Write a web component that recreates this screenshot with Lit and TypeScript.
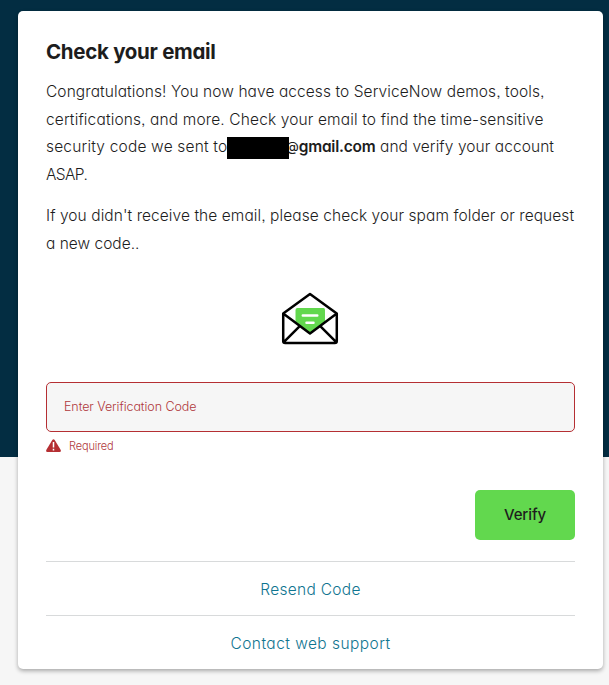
import { LitElement, html, css } from "lit";
import { customElement } from "lit/decorators.js";

@customElement("app-root")
export class AppRoot extends LitElement {
  static styles = css`
    :host {
      display: block;
      box-sizing: border-box;
      height: 685px;
      padding: 11px 6px 16px 18px;
      overflow: hidden;
      background: linear-gradient(#032d42 457px, #f6f6f6 457px);
      font-family: Inter, "Open Sans", sans-serif;
      font-feature-settings: "cv11", "ss03";
      font-weight: 300;
      font-size: 15.5px;
      color: #1d1d1d;
    }
    .card {
      display: flex;
      flex-direction: column;
      box-sizing: border-box;
      height: 658px;
      padding: 27px 28px 0;
      border-radius: 5px;
      background: #fff;
      box-shadow: 0 2px 4px rgba(0, 0, 0, 0.32);
    }
    h1 {
      margin: 0 0 12px;
      font-size: 20.5px;
      line-height: 28px;
      font-weight: 650;
      letter-spacing: -0.3px;
    }
    p {
      margin: 0 0 14px;
      line-height: 27.6px;
      white-space: nowrap;
    }
    .line {
      display: flex;
      height: 27.6px;
    }
    .l1 { letter-spacing: 0.08px; }
    .l2 { letter-spacing: 0.135px; }
    .l4 { letter-spacing: -0.6px; }
    .l5 { letter-spacing: 0.07px; }
    .lead {
      width: 181px;
      letter-spacing: 0.18px;
    }
    .tail { letter-spacing: 0.07px; }
    .address {
      display: flex;
      align-items: center;
      width: 153px;
      font-weight: 600;
    }
    .domain { letter-spacing: -0.25px; }
    .redacted {
      position: relative;
      z-index: 1;
      flex: none;
      width: 62px;
      height: 22px;
      margin-top: 3px;
      background: #000;
    }
    .at {
      margin-left: -3px;
      font-size: 13px;
      font-weight: 500;
    }
    .envelope {
      display: block;
      width: 60px;
      height: 56px;
      margin: 18.5px 235px 36px 234px;
    }
    .field {
      box-sizing: border-box;
      height: 50px;
      padding: 0 17px;
      border: 1px solid #b52f33;
      border-radius: 5px;
      background: #f6f6f6;
      color: #b0383c;
      font-size: 12.5px;
      line-height: 48px;
      letter-spacing: -0.08px;
    }
    .error {
      display: flex;
      align-items: center;
      gap: 8px;
      height: 16px;
      margin-top: 6px;
      color: #b0383c;
      font-size: 11px;
      letter-spacing: -0.15px;
    }
    .error svg {
      width: 15px;
      height: 14px;
    }
    button {
      align-self: flex-end;
      width: 100px;
      height: 50px;
      margin: 36px 0 21px;
      padding: 0 0 1px;
      border: 0;
      border-radius: 5px;
      background: #62d84e;
      color: #1d1d1d;
      font: 550 15px Inter, sans-serif;
      font-feature-settings: inherit;
      letter-spacing: -0.1px;
    }
    .link {
      box-sizing: border-box;
      height: 54px;
      border-top: 1px solid #d8dadb;
      color: #0f7590;
      line-height: 56px;
      text-align: center;
      text-decoration: none;
    }
    .resend { letter-spacing: 0.3px; }
    .support { letter-spacing: 0.45px; }
  `;

  render() {
    return html`
      <main class="card">
        <h1>Check your email</h1>
        <p>
          <span class="line l1">Congratulations! You now have access to ServiceNow demos, tools,</span>
          <span class="line l2">certifications, and more. Check your email to find the time-sensitive</span>
          <span class="line">
            <span class="lead">security code we sent to</span>
            <span class="address"><span class="redacted"></span><span class="at">@</span><span class="domain">gmail.com</span></span>
            <span class="tail">and verify your account</span>
          </span>
          <span class="line l4">ASAP.</span>
        </p>
        <p>
          <span class="line l5">If you didn't receive the email, please check your spam folder or request</span>
          <span class="line">a new code..</span>
        </p>
        <svg class="envelope" viewBox="280 290 60 56" fill="none" stroke-linejoin="round" stroke-linecap="round">
          <path d="M297.500 308h26q1.500 0 1.500 2v13.500l-15 10-14.500-10v-13.500q0-2 2-2z" fill="#62d84e" />
          <path d="M302.800 315.500h14.500M306.500 322.700h7" stroke="#fff" stroke-width="2.500" />
          <path d="M283.200 313.500L310 294l26.800 19.500V341q0 2-2 2h-49.600q-2 0-2-2zL310 333.500l26.800-20M284 342l15-15M336 342l-15-15" stroke="#000" stroke-width="2.500" />
        </svg>
        <div class="field">Enter Verification Code</div>
        <div class="error">
          <svg viewBox="0 0 15 14">
            <path d="M6.300 1Q7.500-.5 8.700 1l5.900 9.800q.9 2-1 2.200H1.400q-1.900-.2-1-2.200z" fill="#b52f33" />
            <path d="M7.500 3v5.500M7.500 9.800v1.600" stroke="#fff" stroke-width="1.500" />
          </svg>
          <span>Required</span>
        </div>
        <button type="button">Verify</button>
        <a class="link resend">Resend Code</a>
        <a class="link support">Contact web support</a>
      </main>
    `;
  }
}
